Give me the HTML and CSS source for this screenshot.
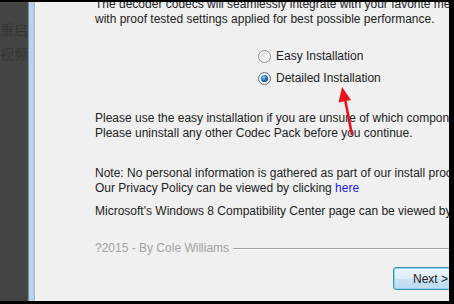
FILE: index.html
```html
<!DOCTYPE html>
<html lang="en">
<head>
    <meta charset="UTF-8">
    <meta name="viewport" content="width=device-width, initial-scale=1.0">
    <title>Codec Pack Setup</title>
    <link rel="stylesheet" href="styles.css">
</head>
<body>
    <div class="screen">
        <div class="desktop">
            <div class="desk-line">重启</div>
            <div class="desk-line">的视频</div>
        </div>
        <div class="frame-edge"></div>
        <div class="panel">
            <div class="window">
                <p class="intro">The decoder codecs will seamlessly integrate with your favorite media players<br>with proof tested settings applied for best possible performance.</p>

                <div class="options">
                    <label class="option">
                        <svg class="radio" width="13" height="13" viewBox="0 0 13 13">
                            <defs>
                                <linearGradient id="rbg" x1="0" y1="0" x2="1" y2="1">
                                    <stop offset="0" stop-color="#d8d8d8"/>
                                    <stop offset="1" stop-color="#fbfbfb"/>
                                </linearGradient>
                            </defs>
                            <circle cx="6.5" cy="6.5" r="6" fill="#f4f4f4" stroke="#8d8e8f"/>
                            <circle cx="6.5" cy="6.5" r="4.3" fill="url(#rbg)"/>
                        </svg>
                        <span>Easy Installation</span>
                    </label>
                    <label class="option">
                        <svg class="radio" width="13" height="13" viewBox="0 0 13 13">
                            <defs>
                                <radialGradient id="dot" cx="0.4" cy="0.35" r="0.7">
                                    <stop offset="0" stop-color="#8fd0f5"/>
                                    <stop offset="0.5" stop-color="#2b7fc2"/>
                                    <stop offset="1" stop-color="#14456f"/>
                                </radialGradient>
                            </defs>
                            <circle cx="6.5" cy="6.5" r="6" fill="#f4f4f4" stroke="#5d6b78"/>
                            <circle cx="6.5" cy="6.5" r="3.6" fill="url(#dot)"/>
                        </svg>
                        <span>Detailed Installation</span>
                    </label>
                </div>

                <p class="para">Please use the easy installation if you are unsure of which components to install.<br>Please uninstall any other Codec Pack before you continue.</p>

                <p class="note">Note: No personal information is gathered as part of our install process.<br>Our Privacy Policy can be viewed by clicking <a href="#" class="link">here</a></p>

                <p class="ms">Microsoft's Windows 8 Compatibility Center page can be viewed by clicking here</p>

                <div class="credits">
                    <span>?2015 - By Cole Williams</span>
                    <span class="rule"></span>
                </div>

                <div class="buttons">
                    <button class="next">Next &gt;</button>
                </div>
            </div>
        </div>
    </div>

    <svg class="arrow" width="454" height="304" viewBox="0 0 454 304">
        <line x1="352" y1="135" x2="345" y2="99" stroke="#e8141c" stroke-width="2.6"/>
        <polygon points="342,87 351,100 338.5,102.5" fill="#e8141c"/>
    </svg>
</body>
</html>
```

FILE: styles.css
```css
body {
    margin: 0;
    background-color: #000;
    font-family: "Liberation Sans", Arial, sans-serif;
    font-size: 12px;
    color: #222;
}
.screen {
    display: flex;
    height: 304px;
    padding: 2px 5px 3px 0;
    box-sizing: border-box;
}
.desktop {
    width: 28px;
    background-color: #444;
    overflow: hidden;
    padding-top: 15px;
    box-sizing: border-box;
}
.desk-line {
    font-family: "Noto Sans CJK SC", sans-serif;
    font-size: 14px;
    line-height: 24px;
    color: #363636;
    white-space: nowrap;
    direction: rtl;
    text-align: right;
}
.frame-edge {
    width: 5px;
    background-color: #b9d1ea;
    border-left: 1px solid #7d93ab;
    border-right: 1px solid #9db4cd;
}
.panel {
    flex: 1;
    background-color: #f0f0f0;
    border-left: 1px solid #fafafa;
    overflow: hidden;
}
.window {
    width: 445px;
    padding-left: 59px;
    box-sizing: border-box;
    white-space: nowrap;
    line-height: 15px;
}
.window p {
    margin: 0;
}
.intro {
    margin-top: -5px !important;
}
.options {
    display: flex;
    flex-direction: column;
    gap: 7px;
    margin-top: 22px;
    padding-left: 163px;
}
.option {
    display: flex;
    align-items: center;
    gap: 5px;
    height: 15px;
}
.radio {
    flex: none;
}
.para {
    margin-top: 25px !important;
}
.note {
    margin-top: 25px !important;
}
.ms {
    margin-top: 8px !important;
}
.link {
    color: #1d1de0;
    text-decoration: none;
}
.credits {
    display: flex;
    align-items: center;
    margin-top: 22px;
    color: #a2a2a2;
}
.rule {
    flex: 1;
    height: 0;
    margin-left: 4px;
    border-top: 1px solid #a0a0a0;
    border-bottom: 1px solid #fff;
}
.buttons {
    display: flex;
    justify-content: flex-end;
    margin-top: 11px;
    padding-right: 13px;
}
.next {
    width: 75px;
    height: 23px;
    font-family: "Liberation Sans", Arial, sans-serif;
    font-size: 12px;
    color: #222;
    border: 1px solid #3c8fb8;
    border-radius: 3px;
    background: linear-gradient(#eef6fb, #dcecf6 50%, #c8e2f2 51%, #bcdcef);
    box-shadow: inset 0 0 0 1px #93d4f0;
}
.arrow {
    position: absolute;
    left: 0;
    top: 0;
}
```
